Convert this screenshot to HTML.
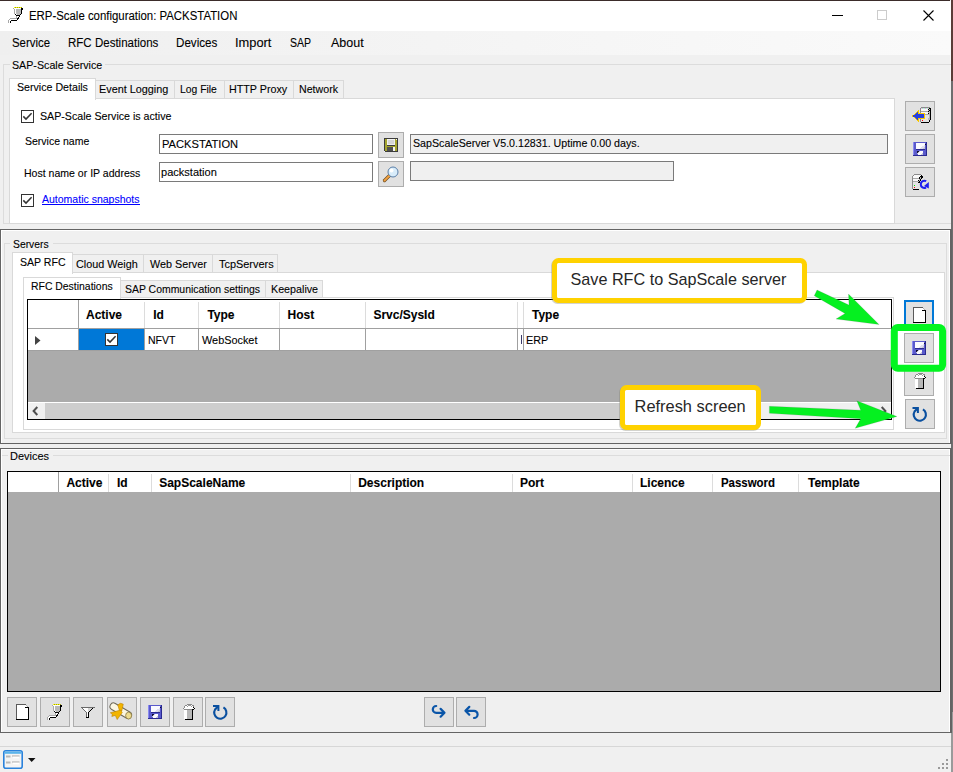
<!DOCTYPE html>
<html><head><meta charset="utf-8"><style>
html,body{margin:0;padding:0;}
body{width:953px;height:772px;position:relative;overflow:hidden;background:#f0f0f0;font-family:"Liberation Sans",sans-serif;color:#000;}
body>div{position:absolute;}
.t{white-space:nowrap;line-height:1;-webkit-text-stroke:0.1px currentColor;}
</style></head><body>
<div style="left:0px;top:0px;width:953px;height:1px;background:#3b2c2a"></div>
<div style="left:951px;top:0px;width:2px;height:81px;background:#5a3d38"></div>
<div style="left:951px;top:81px;width:2px;height:631px;background:#6e6e6e"></div>
<div style="left:951px;top:712px;width:2px;height:60px;background:#9a9a9a"></div>
<div style="left:950px;top:0px;width:1px;height:81px;background:#f7f7f7"></div>
<div style="left:0px;top:1px;width:951px;height:30px;background:#fff"></div>
<div class="t" style="left:28.59px;top:9.52px;font-size:12.5px;transform:scaleX(0.9117);transform-origin:0 0;">ERP-Scale configuration: PACKSTATION</div>
<div style="left:832px;top:15px;width:11px;height:1px;background:#000"></div>
<div style="left:877px;top:10px;width:10px;height:10px;border:1px solid #cccccc;box-sizing:border-box"></div>
<svg style="position:absolute;left:922px;top:9px;" width="13" height="13" viewBox="0 0 13 13"><path d="M1.5 1.5L11.5 11.5M11.5 1.5L1.5 11.5" stroke="#000" stroke-width="1.1" fill="none"/></svg>
<div style="left:0px;top:31px;width:951px;height:24px;background:linear-gradient(to right,#efefef,#fafafa)"></div>
<div class="t" style="left:12.43px;top:36.52px;font-size:12.5px;transform:scaleX(0.9136);transform-origin:0 0;">Service</div>
<div class="t" style="left:68.08px;top:36.52px;font-size:12.5px;transform:scaleX(0.9223);transform-origin:0 0;">RFC Destinations</div>
<div class="t" style="left:176.07px;top:36.52px;font-size:12.5px;transform:scaleX(0.9302);transform-origin:0 0;">Devices</div>
<div class="t" style="left:235.24px;top:36.52px;font-size:12.5px;transform:scaleX(1.0277);transform-origin:0 0;">Import</div>
<div class="t" style="left:290.47px;top:36.52px;font-size:12.5px;transform:scaleX(0.8421);transform-origin:0 0;">SAP</div>
<div class="t" style="left:331.00px;top:36.52px;font-size:12.5px;transform:scaleX(0.9992);transform-origin:0 0;">About</div>
<div style="left:3px;top:64px;width:948px;height:1px;background:#dcdcdc"></div>
<div style="left:3px;top:64px;width:1px;height:160px;background:#dcdcdc"></div>
<div style="left:3px;top:223px;width:948px;height:1px;background:#dcdcdc"></div>
<div style="left:10px;top:58px;width:95px;height:13px;background:#f0f0f0"></div>
<div class="t" style="left:11.51px;top:59.69px;font-size:11px;transform:scaleX(0.9707);transform-origin:0 0;">SAP-Scale Service</div>
<div style="left:9px;top:98px;width:886px;height:126px;background:#fff;border:1px solid #d9d9d9;box-sizing:border-box"></div>
<div style="left:95px;top:80px;width:80px;height:19px;background:#f0f0f0;border:1px solid #d9d9d9;box-sizing:border-box"></div>
<div class="t" style="left:99.44px;top:84.29px;font-size:11px;transform:scaleX(0.9847);transform-origin:0 0;">Event Logging</div>
<div style="left:174px;top:80px;width:51px;height:19px;background:#f0f0f0;border:1px solid #d9d9d9;box-sizing:border-box"></div>
<div class="t" style="left:180.48px;top:84.29px;font-size:11px;transform:scaleX(0.9404);transform-origin:0 0;">Log File</div>
<div style="left:224px;top:80px;width:70px;height:19px;background:#f0f0f0;border:1px solid #d9d9d9;box-sizing:border-box"></div>
<div class="t" style="left:229.25px;top:84.29px;font-size:11px;transform:scaleX(0.9749);transform-origin:0 0;">HTTP Proxy</div>
<div style="left:293px;top:80px;width:51px;height:19px;background:#f0f0f0;border:1px solid #d9d9d9;box-sizing:border-box"></div>
<div class="t" style="left:299.45px;top:84.29px;font-size:11px;transform:scaleX(0.9671);transform-origin:0 0;">Network</div>
<div style="left:9px;top:78px;width:87px;height:22px;background:#fff;border:1px solid #d9d9d9;border-bottom:none;box-sizing:border-box"></div>
<div class="t" style="left:16.82px;top:82.09px;font-size:11px;transform:scaleX(0.9669);transform-origin:0 0;">Service Details</div>
<div style="left:21px;top:110px;width:13px;height:13px;background:#fff;border:1px solid #333;box-sizing:border-box"></div>
<svg style="position:absolute;left:21px;top:110px;" width="13" height="13" viewBox="0 0 13 13"><path d="M2.3 6.4L5 9.1L10.6 3.3" stroke="#333" stroke-width="1.5" fill="none"/></svg>
<div class="t" style="left:39.82px;top:110.99px;font-size:11px;transform:scaleX(0.9685);transform-origin:0 0;">SAP-Scale Service is active</div>
<div class="t" style="left:25.12px;top:135.99px;font-size:11px;transform:scaleX(0.9555);transform-origin:0 0;">Service name</div>
<div class="t" style="left:24.36px;top:168.29px;font-size:11px;transform:scaleX(0.9572);transform-origin:0 0;">Host name or IP address</div>
<div style="left:159px;top:134px;width:214px;height:20px;background:#fff;border:1px solid #7a7a7a;box-sizing:border-box"></div>
<div class="t" style="left:161.61px;top:138.59px;font-size:11px;transform:scaleX(1.0126);transform-origin:0 0;">PACKSTATION</div>
<div style="left:159px;top:162px;width:214px;height:20px;background:#fff;border:1px solid #7a7a7a;box-sizing:border-box"></div>
<div class="t" style="left:161.05px;top:166.69px;font-size:11px;transform:scaleX(1.0032);transform-origin:0 0;">packstation</div>
<div style="left:410px;top:134px;width:478px;height:20px;background:#f0f0f0;border:1px solid #7a7a7a;box-sizing:border-box"></div>
<div class="t" style="left:413.01px;top:138.29px;font-size:11px;transform:scaleX(0.9702);transform-origin:0 0;">SapScaleServer V5.0.12831. Uptime 0.00 days.</div>
<div style="left:410px;top:161px;width:264px;height:20px;background:#f0f0f0;border:1px solid #7a7a7a;box-sizing:border-box"></div>
<div style="left:378px;top:132px;width:26px;height:26px;background:#e1e1e1;border:1px solid #adadad;box-sizing:border-box"></div>
<div style="left:378px;top:161px;width:26px;height:26px;background:#e1e1e1;border:1px solid #adadad;box-sizing:border-box"></div>
<div style="left:21px;top:194px;width:13px;height:13px;background:#fff;border:1px solid #333;box-sizing:border-box"></div>
<svg style="position:absolute;left:21px;top:194px;" width="13" height="13" viewBox="0 0 13 13"><path d="M2.3 6.4L5 9.1L10.6 3.3" stroke="#333" stroke-width="1.5" fill="none"/></svg>
<div class="t" style="left:42.40px;top:193.69px;font-size:11px;transform:scaleX(0.9553);transform-origin:0 0;color:#0000ff">Automatic snapshots</div>
<div style="left:42px;top:204px;width:98px;height:1px;background:#0000ff"></div>
<div style="left:905px;top:101px;width:30px;height:30px;background:#e1e1e1;border:1px solid #adadad;box-sizing:border-box"></div>
<div style="left:905px;top:134px;width:30px;height:30px;background:#e1e1e1;border:1px solid #adadad;box-sizing:border-box"></div>
<div style="left:905px;top:167px;width:30px;height:30px;background:#e1e1e1;border:1px solid #adadad;box-sizing:border-box"></div>
<div style="left:0px;top:229px;width:952px;height:215px;border-top:1px solid #646464;border-left:1px solid #646464;border-bottom:1px solid #646464;border-right:2px solid #646464;box-sizing:border-box"></div>
<div style="left:1px;top:230px;width:949px;height:1px;background:#fff"></div>
<div style="left:1px;top:230px;width:1px;height:213px;background:#fff"></div>
<div style="left:949px;top:230px;width:1px;height:213px;background:#fff"></div>
<div style="left:4px;top:243px;width:943px;height:196px;border:1px solid #dcdcdc;box-sizing:border-box"></div>
<div style="left:10px;top:236px;width:43px;height:15px;background:#f0f0f0"></div>
<div class="t" style="left:12.73px;top:238.69px;font-size:11px;transform:scaleX(0.9405);transform-origin:0 0;">Servers</div>
<div style="left:12px;top:272px;width:933px;height:161px;background:#fff;border:1px solid #d9d9d9;box-sizing:border-box"></div>
<div style="left:72px;top:254px;width:72px;height:19px;background:#f0f0f0;border:1px solid #d9d9d9;box-sizing:border-box"></div>
<div class="t" style="left:75.91px;top:259.09px;font-size:11px;transform:scaleX(0.9821);transform-origin:0 0;">Cloud Weigh</div>
<div style="left:143px;top:254px;width:70px;height:19px;background:#f0f0f0;border:1px solid #d9d9d9;box-sizing:border-box"></div>
<div class="t" style="left:150.10px;top:259.09px;font-size:11px;transform:scaleX(0.9801);transform-origin:0 0;">Web Server</div>
<div style="left:212px;top:254px;width:66px;height:19px;background:#f0f0f0;border:1px solid #d9d9d9;box-sizing:border-box"></div>
<div class="t" style="left:219.05px;top:259.09px;font-size:11px;transform:scaleX(0.9931);transform-origin:0 0;">TcpServers</div>
<div style="left:12px;top:252px;width:61px;height:22px;background:#fff;border:1px solid #d9d9d9;border-bottom:none;box-sizing:border-box"></div>
<div class="t" style="left:19.72px;top:256.69px;font-size:11px;transform:scaleX(0.9591);transform-origin:0 0;">SAP RFC</div>
<div style="left:23px;top:297px;width:871px;height:133px;background:#fff;border:1px solid #d9d9d9;box-sizing:border-box"></div>
<div style="left:120px;top:280px;width:146px;height:18px;background:#f0f0f0;border:1px solid #d9d9d9;box-sizing:border-box"></div>
<div class="t" style="left:124.53px;top:283.89px;font-size:11px;transform:scaleX(0.9492);transform-origin:0 0;">SAP Communication settings</div>
<div style="left:265px;top:280px;width:58px;height:18px;background:#f0f0f0;border:1px solid #d9d9d9;box-sizing:border-box"></div>
<div class="t" style="left:271.35px;top:283.89px;font-size:11px;transform:scaleX(0.9745);transform-origin:0 0;">Keepalive</div>
<div style="left:23px;top:277px;width:98px;height:22px;background:#fff;border:1px solid #d9d9d9;border-bottom:none;box-sizing:border-box"></div>
<div class="t" style="left:30.67px;top:280.99px;font-size:11px;transform:scaleX(0.9471);transform-origin:0 0;">RFC Destinations</div>
<div style="left:27px;top:299px;width:865px;height:121px;background:#ababab;border:1px solid #000;box-sizing:border-box"></div>
<div style="left:28px;top:300px;width:863px;height:29px;background:#fff"></div>
<div style="left:28px;top:328px;width:863px;height:1px;background:#a0a0a0"></div>
<div style="left:28px;top:329px;width:863px;height:22px;background:#fff"></div>
<div style="left:28px;top:350px;width:863px;height:1px;background:#a0a0a0"></div>
<div style="left:78px;top:300px;width:1px;height:28px;background:#a0a0a0"></div>
<div style="left:78px;top:329px;width:1px;height:22px;background:#a0a0a0"></div>
<div style="left:144px;top:302px;width:1px;height:26px;background:#dcdcdc"></div>
<div style="left:144px;top:329px;width:1px;height:22px;background:#a0a0a0"></div>
<div style="left:198px;top:302px;width:1px;height:26px;background:#dcdcdc"></div>
<div style="left:198px;top:329px;width:1px;height:22px;background:#a0a0a0"></div>
<div style="left:279px;top:302px;width:1px;height:26px;background:#dcdcdc"></div>
<div style="left:279px;top:329px;width:1px;height:22px;background:#a0a0a0"></div>
<div style="left:365px;top:302px;width:1px;height:26px;background:#dcdcdc"></div>
<div style="left:365px;top:329px;width:1px;height:22px;background:#a0a0a0"></div>
<div style="left:517px;top:302px;width:1px;height:26px;background:#dcdcdc"></div>
<div style="left:517px;top:329px;width:1px;height:22px;background:#a0a0a0"></div>
<div style="left:523px;top:302px;width:1px;height:26px;background:#dcdcdc"></div>
<div style="left:523px;top:329px;width:1px;height:22px;background:#a0a0a0"></div>
<div style="left:79px;top:329px;width:65px;height:21px;background:#0078d7"></div>
<div style="left:105px;top:333px;width:13px;height:13px;background:#fff;border:1px solid #333;box-sizing:border-box"></div>
<svg style="position:absolute;left:105px;top:333px;" width="13" height="13" viewBox="0 0 13 13"><path d="M2.3 6.4L5 9.1L10.6 3.3" stroke="#333" stroke-width="1.5" fill="none"/></svg>
<svg style="position:absolute;left:35px;top:336px;" width="6" height="10" viewBox="0 0 6 10"><path d="M0 0L5.5 4.5L0 9Z" fill="#444"/></svg>
<div class="t" style="left:86.00px;top:309.04px;font-size:12px;font-weight:bold;">Active</div>
<div class="t" style="left:153.20px;top:309.04px;font-size:12px;font-weight:bold;">Id</div>
<div class="t" style="left:207.40px;top:309.04px;font-size:12px;font-weight:bold;">Type</div>
<div class="t" style="left:287.50px;top:309.04px;font-size:12px;font-weight:bold;">Host</div>
<div class="t" style="left:373.40px;top:309.04px;font-size:12px;font-weight:bold;">Srvc/SysId</div>
<div class="t" style="left:532.00px;top:309.04px;font-size:12px;font-weight:bold;">Type</div>
<div class="t" style="left:147.86px;top:334.89px;font-size:11px;transform:scaleX(0.9557);transform-origin:0 0;">NFVT</div>
<div class="t" style="left:202.30px;top:334.89px;font-size:11px;transform:scaleX(0.9893);transform-origin:0 0;">WebSocket</div>
<div class="t" style="left:526.44px;top:334.89px;font-size:11px;transform:scaleX(0.9846);transform-origin:0 0;">ERP</div>
<div style="left:521px;top:335px;width:1px;height:9px;background:#3a3a6a"></div>
<div style="left:28px;top:402px;width:863px;height:1px;background:#fff"></div>
<div style="left:28px;top:403px;width:863px;height:16px;background:#f0f0f0"></div>
<div style="left:45px;top:403px;width:656px;height:16px;background:#cdcdcd"></div>
<svg style="position:absolute;left:31px;top:405px;" width="10" height="12" viewBox="0 0 10 12"><path d="M6.3 2L2.6 6L6.3 10" stroke="#505050" stroke-width="2" fill="none"/></svg>
<svg style="position:absolute;left:879px;top:405px;" width="10" height="12" viewBox="0 0 10 12"><path d="M2.7 2L6.4 6L2.7 10" stroke="#505050" stroke-width="2" fill="none"/></svg>
<div style="left:904px;top:300px;width:30px;height:30px;background:#e1e1e1;border:2px solid #0078d7;box-sizing:border-box"></div>
<div style="left:904px;top:333px;width:30px;height:30px;background:#e1e1e1;border:1px solid #adadad;box-sizing:border-box"></div>
<div style="left:904px;top:366px;width:30px;height:30px;background:#e1e1e1;border:1px solid #adadad;box-sizing:border-box"></div>
<div style="left:905px;top:399px;width:30px;height:30px;background:#e1e1e1;border:1px solid #adadad;box-sizing:border-box"></div>
<div style="left:0px;top:448px;width:952px;height:285px;border-top:1px solid #646464;border-left:1px solid #646464;border-bottom:1px solid #646464;border-right:2px solid #646464;box-sizing:border-box"></div>
<div style="left:1px;top:449px;width:949px;height:1px;background:#fff"></div>
<div style="left:1px;top:449px;width:1px;height:283px;background:#fff"></div>
<div style="left:949px;top:449px;width:1px;height:283px;background:#fff"></div>
<div style="left:2px;top:455px;width:948px;height:1px;background:#dcdcdc"></div>
<div style="left:8px;top:450px;width:45px;height:13px;background:#f0f0f0"></div>
<div class="t" style="left:9.63px;top:450.69px;font-size:11px;transform:scaleX(0.9954);transform-origin:0 0;">Devices</div>
<div style="left:7px;top:471px;width:934px;height:221px;background:#ababab;border:1px solid #000;box-sizing:border-box"></div>
<div style="left:8px;top:472px;width:932px;height:20px;background:#fff"></div>
<div style="left:58px;top:472px;width:1px;height:20px;background:#a0a0a0"></div>
<div style="left:108px;top:474px;width:1px;height:18px;background:#dcdcdc"></div>
<div style="left:151px;top:474px;width:1px;height:18px;background:#dcdcdc"></div>
<div style="left:350px;top:474px;width:1px;height:18px;background:#dcdcdc"></div>
<div style="left:512px;top:474px;width:1px;height:18px;background:#dcdcdc"></div>
<div style="left:632px;top:474px;width:1px;height:18px;background:#dcdcdc"></div>
<div style="left:712px;top:474px;width:1px;height:18px;background:#dcdcdc"></div>
<div style="left:798px;top:474px;width:1px;height:18px;background:#dcdcdc"></div>
<div class="t" style="left:66.40px;top:477.14px;font-size:12px;font-weight:bold;">Active</div>
<div class="t" style="left:117.00px;top:477.14px;font-size:12px;font-weight:bold;">Id</div>
<div class="t" style="left:159.20px;top:477.14px;font-size:12px;font-weight:bold;">SapScaleName</div>
<div class="t" style="left:358.20px;top:477.14px;font-size:12px;font-weight:bold;">Description</div>
<div class="t" style="left:520.00px;top:477.14px;font-size:12px;font-weight:bold;">Port</div>
<div class="t" style="left:640.00px;top:477.14px;font-size:12px;font-weight:bold;">Licence</div>
<div class="t" style="left:808.00px;top:477.14px;font-size:12px;font-weight:bold;">Template</div>
<div class="t" style="left:720.79px;top:477.14px;font-size:12px;font-weight:bold;transform:scaleX(0.9524);transform-origin:0 0;">Password</div>
<div style="left:7px;top:697px;width:30px;height:30px;background:#e1e1e1;border:1px solid #adadad;box-sizing:border-box"></div>
<div style="left:40px;top:697px;width:30px;height:30px;background:#e1e1e1;border:1px solid #adadad;box-sizing:border-box"></div>
<div style="left:73px;top:697px;width:30px;height:30px;background:#e1e1e1;border:1px solid #adadad;box-sizing:border-box"></div>
<div style="left:107px;top:697px;width:30px;height:30px;background:#e1e1e1;border:1px solid #adadad;box-sizing:border-box"></div>
<div style="left:140px;top:697px;width:30px;height:30px;background:#e1e1e1;border:1px solid #adadad;box-sizing:border-box"></div>
<div style="left:173px;top:697px;width:30px;height:30px;background:#e1e1e1;border:1px solid #adadad;box-sizing:border-box"></div>
<div style="left:205px;top:697px;width:30px;height:30px;background:#e1e1e1;border:1px solid #adadad;box-sizing:border-box"></div>
<div style="left:424px;top:697px;width:30px;height:30px;background:#e1e1e1;border:1px solid #adadad;box-sizing:border-box"></div>
<div style="left:456px;top:697px;width:30px;height:30px;background:#e1e1e1;border:1px solid #adadad;box-sizing:border-box"></div>
<div style="left:0px;top:746px;width:951px;height:1px;background:#d7d7d7"></div>
<svg style="position:absolute;left:0;top:0" width="953" height="772" viewBox="0 0 953 772"><rect x="14" y="7" width="1" height="1" fill="#ffff00"/><rect x="15" y="7" width="1" height="1" fill="#9a9a10"/><rect x="16" y="7" width="1" height="1" fill="#ffff00"/><rect x="17" y="7" width="1" height="1" fill="#9a9a10"/><rect x="18" y="7" width="1" height="1" fill="#ffff00"/><rect x="19" y="7" width="1" height="1" fill="#9a9a10"/><rect x="20" y="7" width="1" height="1" fill="#ffff00"/><rect x="21" y="7" width="1" height="1" fill="#9a9a10"/><rect x="13" y="8" width="1" height="1" fill="#a8a8a8"/><rect x="14" y="8" width="7" height="1" fill="#ffffff"/><rect x="21" y="8" width="2" height="1" fill="#000000"/><rect x="14" y="9" width="1" height="1" fill="#a8a8a8"/><rect x="15" y="9" width="1" height="1" fill="#ffffff"/><rect x="16" y="9" width="5" height="1" fill="#b8b8b8"/><rect x="21" y="9" width="2" height="1" fill="#000000"/><rect x="14" y="10" width="1" height="1" fill="#a8a8a8"/><rect x="15" y="10" width="1" height="1" fill="#ffffff"/><rect x="16" y="10" width="5" height="1" fill="#b8b8b8"/><rect x="21" y="10" width="1" height="1" fill="#000000"/><rect x="14" y="11" width="1" height="1" fill="#a8a8a8"/><rect x="15" y="11" width="1" height="1" fill="#ffffff"/><rect x="16" y="11" width="5" height="1" fill="#b8b8b8"/><rect x="21" y="11" width="1" height="1" fill="#000000"/><rect x="14" y="12" width="1" height="1" fill="#a8a8a8"/><rect x="15" y="12" width="1" height="1" fill="#ffffff"/><rect x="16" y="12" width="5" height="1" fill="#b8b8b8"/><rect x="21" y="12" width="1" height="1" fill="#000000"/><rect x="14" y="13" width="1" height="1" fill="#a8a8a8"/><rect x="15" y="13" width="1" height="1" fill="#ffffff"/><rect x="16" y="13" width="5" height="1" fill="#b8b8b8"/><rect x="21" y="13" width="1" height="1" fill="#000000"/><rect x="15" y="14" width="1" height="1" fill="#000000"/><rect x="16" y="14" width="1" height="1" fill="#ffffff"/><rect x="17" y="14" width="3" height="1" fill="#b8b8b8"/><rect x="20" y="14" width="1" height="1" fill="#000000"/><rect x="16" y="15" width="4" height="1" fill="#000000"/><rect x="16" y="16" width="1" height="1" fill="#a8a8a8"/><rect x="17" y="16" width="2" height="1" fill="#ffffff"/><rect x="19" y="16" width="1" height="1" fill="#000000"/><rect x="16" y="17" width="1" height="1" fill="#a8a8a8"/><rect x="17" y="17" width="1" height="1" fill="#ffffff"/><rect x="18" y="17" width="1" height="1" fill="#000000"/><rect x="10" y="18" width="7" height="1" fill="#a8a8a8"/><rect x="17" y="18" width="2" height="1" fill="#000000"/><rect x="9" y="19" width="1" height="1" fill="#a8a8a8"/><rect x="10" y="19" width="7" height="1" fill="#ffffff"/><rect x="17" y="19" width="1" height="1" fill="#000000"/><rect x="8" y="20" width="1" height="1" fill="#a8a8a8"/><rect x="9" y="20" width="2" height="1" fill="#ffffff"/><rect x="11" y="20" width="6" height="1" fill="#000000"/><rect x="8" y="21" width="1" height="1" fill="#a8a8a8"/><rect x="9" y="21" width="1" height="1" fill="#ffffff"/><rect x="10" y="21" width="1" height="1" fill="#000000"/><rect x="8" y="22" width="1" height="1" fill="#a8a8a8"/><rect x="9" y="22" width="1" height="1" fill="#ffffff"/><rect x="10" y="22" width="1" height="1" fill="#000000"/><rect x="384" y="138" width="14" height="1" fill="#3c3c3c"/><rect x="384" y="139" width="1" height="1" fill="#3c3c3c"/><rect x="385" y="139" width="2" height="1" fill="#a3a32e"/><rect x="387" y="139" width="8" height="1" fill="#f4f4f4"/><rect x="395" y="139" width="1" height="1" fill="#a3a32e"/><rect x="396" y="139" width="1" height="1" fill="#f4f4f4"/><rect x="397" y="139" width="1" height="1" fill="#3c3c3c"/><rect x="384" y="140" width="1" height="1" fill="#3c3c3c"/><rect x="385" y="140" width="2" height="1" fill="#a3a32e"/><rect x="387" y="140" width="1" height="1" fill="#eeeeee"/><rect x="388" y="140" width="6" height="1" fill="#d6d6d6"/><rect x="394" y="140" width="1" height="1" fill="#eeeeee"/><rect x="395" y="140" width="2" height="1" fill="#a3a32e"/><rect x="397" y="140" width="1" height="1" fill="#3c3c3c"/><rect x="384" y="141" width="1" height="1" fill="#3c3c3c"/><rect x="385" y="141" width="2" height="1" fill="#a3a32e"/><rect x="387" y="141" width="1" height="1" fill="#eeeeee"/><rect x="388" y="141" width="6" height="1" fill="#d6d6d6"/><rect x="394" y="141" width="1" height="1" fill="#eeeeee"/><rect x="395" y="141" width="2" height="1" fill="#a3a32e"/><rect x="397" y="141" width="1" height="1" fill="#3c3c3c"/><rect x="384" y="142" width="1" height="1" fill="#3c3c3c"/><rect x="385" y="142" width="2" height="1" fill="#a3a32e"/><rect x="387" y="142" width="1" height="1" fill="#eeeeee"/><rect x="388" y="142" width="6" height="1" fill="#d6d6d6"/><rect x="394" y="142" width="1" height="1" fill="#eeeeee"/><rect x="395" y="142" width="2" height="1" fill="#a3a32e"/><rect x="397" y="142" width="1" height="1" fill="#3c3c3c"/><rect x="384" y="143" width="1" height="1" fill="#3c3c3c"/><rect x="385" y="143" width="2" height="1" fill="#a3a32e"/><rect x="387" y="143" width="1" height="1" fill="#eeeeee"/><rect x="388" y="143" width="6" height="1" fill="#d6d6d6"/><rect x="394" y="143" width="1" height="1" fill="#eeeeee"/><rect x="395" y="143" width="2" height="1" fill="#a3a32e"/><rect x="397" y="143" width="1" height="1" fill="#3c3c3c"/><rect x="384" y="144" width="1" height="1" fill="#3c3c3c"/><rect x="385" y="144" width="2" height="1" fill="#a3a32e"/><rect x="387" y="144" width="8" height="1" fill="#eeeeee"/><rect x="395" y="144" width="2" height="1" fill="#a3a32e"/><rect x="397" y="144" width="1" height="1" fill="#3c3c3c"/><rect x="384" y="145" width="1" height="1" fill="#3c3c3c"/><rect x="385" y="145" width="2" height="1" fill="#a3a32e"/><rect x="387" y="145" width="8" height="1" fill="#3c3c3c"/><rect x="395" y="145" width="2" height="1" fill="#a3a32e"/><rect x="397" y="145" width="1" height="1" fill="#3c3c3c"/><rect x="384" y="146" width="1" height="1" fill="#3c3c3c"/><rect x="385" y="146" width="12" height="1" fill="#a3a32e"/><rect x="397" y="146" width="1" height="1" fill="#3c3c3c"/><rect x="384" y="147" width="1" height="1" fill="#3c3c3c"/><rect x="385" y="147" width="2" height="1" fill="#a3a32e"/><rect x="387" y="147" width="6" height="1" fill="#505050"/><rect x="393" y="147" width="2" height="1" fill="#f4f4f4"/><rect x="395" y="147" width="2" height="1" fill="#a3a32e"/><rect x="397" y="147" width="1" height="1" fill="#3c3c3c"/><rect x="384" y="148" width="1" height="1" fill="#3c3c3c"/><rect x="385" y="148" width="2" height="1" fill="#a3a32e"/><rect x="387" y="148" width="6" height="1" fill="#505050"/><rect x="393" y="148" width="2" height="1" fill="#f4f4f4"/><rect x="395" y="148" width="2" height="1" fill="#a3a32e"/><rect x="397" y="148" width="1" height="1" fill="#3c3c3c"/><rect x="384" y="149" width="1" height="1" fill="#3c3c3c"/><rect x="385" y="149" width="2" height="1" fill="#a3a32e"/><rect x="387" y="149" width="6" height="1" fill="#505050"/><rect x="393" y="149" width="2" height="1" fill="#f4f4f4"/><rect x="395" y="149" width="2" height="1" fill="#a3a32e"/><rect x="397" y="149" width="1" height="1" fill="#3c3c3c"/><rect x="384" y="150" width="1" height="1" fill="#3c3c3c"/><rect x="385" y="150" width="2" height="1" fill="#a3a32e"/><rect x="387" y="150" width="6" height="1" fill="#505050"/><rect x="393" y="150" width="2" height="1" fill="#f4f4f4"/><rect x="395" y="150" width="2" height="1" fill="#a3a32e"/><rect x="397" y="150" width="1" height="1" fill="#3c3c3c"/><rect x="384" y="151" width="1" height="1" fill="#f4f4f4"/><rect x="385" y="151" width="13" height="1" fill="#3c3c3c"/><g transform="translate(383,166)"><path d="M6.5 9.5L1.5 14.5" stroke="#6a4a20" stroke-width="3.2" stroke-linecap="round"/><path d="M6.5 9.5L1.5 14.5" stroke="#f0a040" stroke-width="2" stroke-linecap="round"/><circle cx="10" cy="6" r="5" fill="#d8ecfa" stroke="#5a7fa8" stroke-width="1"/><circle cx="8.5" cy="4.5" r="2" fill="#fff"/></g><rect x="921" y="107" width="9" height="1" fill="#8a8a8a"/><rect x="920" y="108" width="1" height="1" fill="#8a8a8a"/><rect x="921" y="108" width="1" height="1" fill="#f0b0f0"/><rect x="922" y="108" width="1" height="1" fill="#b0f0b0"/><rect x="923" y="108" width="1" height="1" fill="#b0f0f0"/><rect x="924" y="108" width="1" height="1" fill="#f0b0f0"/><rect x="925" y="108" width="1" height="1" fill="#b0f0b0"/><rect x="926" y="108" width="1" height="1" fill="#b0f0f0"/><rect x="927" y="108" width="1" height="1" fill="#f0b0f0"/><rect x="928" y="108" width="1" height="1" fill="#b0f0b0"/><rect x="929" y="108" width="2" height="1" fill="#000000"/><rect x="920" y="109" width="1" height="1" fill="#8a8a8a"/><rect x="921" y="109" width="7" height="1" fill="#f8f8f8"/><rect x="928" y="109" width="1" height="1" fill="#000000"/><rect x="929" y="109" width="1" height="1" fill="#b8b8b8"/><rect x="930" y="109" width="1" height="1" fill="#000000"/><rect x="920" y="110" width="1" height="1" fill="#8a8a8a"/><rect x="921" y="110" width="7" height="1" fill="#f8f8f8"/><rect x="928" y="110" width="1" height="1" fill="#b8b8b8"/><rect x="929" y="110" width="2" height="1" fill="#000000"/><rect x="920" y="111" width="1" height="1" fill="#8a8a8a"/><rect x="921" y="111" width="7" height="1" fill="#a8a8a8"/><rect x="928" y="111" width="1" height="1" fill="#000000"/><rect x="929" y="111" width="1" height="1" fill="#b8b8b8"/><rect x="930" y="111" width="1" height="1" fill="#000000"/><rect x="920" y="112" width="1" height="1" fill="#8a8a8a"/><rect x="921" y="112" width="7" height="1" fill="#f8f8f8"/><rect x="928" y="112" width="2" height="1" fill="#b8b8b8"/><rect x="930" y="112" width="1" height="1" fill="#000000"/><rect x="920" y="113" width="1" height="1" fill="#8a8a8a"/><rect x="921" y="113" width="7" height="1" fill="#f8f8f8"/><rect x="928" y="113" width="1" height="1" fill="#000000"/><rect x="929" y="113" width="1" height="1" fill="#b8b8b8"/><rect x="930" y="113" width="1" height="1" fill="#000000"/><rect x="920" y="114" width="1" height="1" fill="#8a8a8a"/><rect x="921" y="114" width="7" height="1" fill="#a8a8a8"/><rect x="928" y="114" width="2" height="1" fill="#b8b8b8"/><rect x="930" y="114" width="1" height="1" fill="#000000"/><rect x="920" y="115" width="1" height="1" fill="#8a8a8a"/><rect x="921" y="115" width="8" height="1" fill="#e4e4e4"/><rect x="929" y="115" width="1" height="1" fill="#b8b8b8"/><rect x="930" y="115" width="1" height="1" fill="#000000"/><rect x="920" y="116" width="1" height="1" fill="#8a8a8a"/><rect x="921" y="116" width="8" height="1" fill="#e4e4e4"/><rect x="929" y="116" width="1" height="1" fill="#b8b8b8"/><rect x="930" y="116" width="1" height="1" fill="#000000"/><rect x="920" y="117" width="1" height="1" fill="#8a8a8a"/><rect x="921" y="117" width="8" height="1" fill="#e4e4e4"/><rect x="929" y="117" width="1" height="1" fill="#b8b8b8"/><rect x="930" y="117" width="1" height="1" fill="#000000"/><rect x="920" y="118" width="1" height="1" fill="#8a8a8a"/><rect x="921" y="118" width="1" height="1" fill="#e4e4e4"/><rect x="922" y="118" width="1" height="1" fill="#00e000"/><rect x="923" y="118" width="5" height="1" fill="#e4e4e4"/><rect x="928" y="118" width="2" height="1" fill="#b8b8b8"/><rect x="930" y="118" width="1" height="1" fill="#000000"/><rect x="920" y="119" width="1" height="1" fill="#8a8a8a"/><rect x="921" y="119" width="5" height="1" fill="#e4e4e4"/><rect x="926" y="119" width="1" height="1" fill="#f8f0a0"/><rect x="927" y="119" width="1" height="1" fill="#e4e4e4"/><rect x="928" y="119" width="2" height="1" fill="#b8b8b8"/><rect x="930" y="119" width="1" height="1" fill="#000000"/><rect x="920" y="120" width="1" height="1" fill="#8a8a8a"/><rect x="921" y="120" width="1" height="1" fill="#e4e4e4"/><rect x="922" y="120" width="1" height="1" fill="#ff0000"/><rect x="923" y="120" width="6" height="1" fill="#e4e4e4"/><rect x="929" y="120" width="1" height="1" fill="#000000"/><rect x="920" y="121" width="1" height="1" fill="#8a8a8a"/><rect x="921" y="121" width="8" height="1" fill="#e4e4e4"/><rect x="929" y="121" width="1" height="1" fill="#000000"/><rect x="921" y="122" width="8" height="1" fill="#000000"/><rect x="918" y="110" width="1" height="1" fill="#f8c800"/><rect x="917" y="111" width="2" height="1" fill="#f8c800"/><rect x="916" y="112" width="1" height="1" fill="#f8c800"/><rect x="917" y="112" width="1" height="1" fill="#2840e0"/><rect x="918" y="112" width="1" height="1" fill="#f8c800"/><rect x="915" y="113" width="1" height="1" fill="#f8c800"/><rect x="916" y="113" width="2" height="1" fill="#2840e0"/><rect x="918" y="113" width="7" height="1" fill="#f8c800"/><rect x="914" y="114" width="1" height="1" fill="#f8c800"/><rect x="915" y="114" width="9" height="1" fill="#2840e0"/><rect x="924" y="114" width="1" height="1" fill="#f8c800"/><rect x="912" y="115" width="1" height="1" fill="#f8c800"/><rect x="913" y="115" width="11" height="1" fill="#2840e0"/><rect x="924" y="115" width="1" height="1" fill="#f8c800"/><rect x="912" y="116" width="1" height="1" fill="#f8c800"/><rect x="913" y="116" width="11" height="1" fill="#2840e0"/><rect x="924" y="116" width="1" height="1" fill="#f8c800"/><rect x="914" y="117" width="1" height="1" fill="#f8c800"/><rect x="915" y="117" width="9" height="1" fill="#2840e0"/><rect x="924" y="117" width="1" height="1" fill="#f8c800"/><rect x="915" y="118" width="1" height="1" fill="#f8c800"/><rect x="916" y="118" width="2" height="1" fill="#2840e0"/><rect x="918" y="118" width="7" height="1" fill="#f8c800"/><rect x="916" y="119" width="1" height="1" fill="#f8c800"/><rect x="917" y="119" width="1" height="1" fill="#2840e0"/><rect x="918" y="119" width="1" height="1" fill="#f8c800"/><rect x="917" y="120" width="2" height="1" fill="#f8c800"/><rect x="918" y="121" width="1" height="1" fill="#f8c800"/><rect x="913" y="142" width="1" height="1" fill="#8a8af0"/><rect x="914" y="142" width="12" height="1" fill="#5a5acc"/><rect x="926" y="142" width="1" height="1" fill="#2a2a90"/><rect x="913" y="143" width="1" height="1" fill="#8a8af0"/><rect x="914" y="143" width="2" height="1" fill="#5a5acc"/><rect x="916" y="143" width="9" height="1" fill="#fafaff"/><rect x="925" y="143" width="1" height="1" fill="#5a5acc"/><rect x="926" y="143" width="1" height="1" fill="#2a2a90"/><rect x="913" y="144" width="1" height="1" fill="#8a8af0"/><rect x="914" y="144" width="2" height="1" fill="#5a5acc"/><rect x="916" y="144" width="9" height="1" fill="#fafaff"/><rect x="925" y="144" width="1" height="1" fill="#101030"/><rect x="926" y="144" width="1" height="1" fill="#2a2a90"/><rect x="913" y="145" width="1" height="1" fill="#8a8af0"/><rect x="914" y="145" width="2" height="1" fill="#5a5acc"/><rect x="916" y="145" width="8" height="1" fill="#fafaff"/><rect x="924" y="145" width="1" height="1" fill="#dedef0"/><rect x="925" y="145" width="1" height="1" fill="#5a5acc"/><rect x="926" y="145" width="1" height="1" fill="#2a2a90"/><rect x="913" y="146" width="1" height="1" fill="#8a8af0"/><rect x="914" y="146" width="2" height="1" fill="#5a5acc"/><rect x="916" y="146" width="6" height="1" fill="#fafaff"/><rect x="922" y="146" width="3" height="1" fill="#dedef0"/><rect x="925" y="146" width="1" height="1" fill="#5a5acc"/><rect x="926" y="146" width="1" height="1" fill="#2a2a90"/><rect x="913" y="147" width="1" height="1" fill="#8a8af0"/><rect x="914" y="147" width="2" height="1" fill="#5a5acc"/><rect x="916" y="147" width="5" height="1" fill="#fafaff"/><rect x="921" y="147" width="3" height="1" fill="#dedef0"/><rect x="924" y="147" width="1" height="1" fill="#c4c4d8"/><rect x="925" y="147" width="1" height="1" fill="#5a5acc"/><rect x="926" y="147" width="1" height="1" fill="#2a2a90"/><rect x="913" y="148" width="1" height="1" fill="#8a8af0"/><rect x="914" y="148" width="2" height="1" fill="#5a5acc"/><rect x="916" y="148" width="4" height="1" fill="#fafaff"/><rect x="920" y="148" width="3" height="1" fill="#dedef0"/><rect x="923" y="148" width="2" height="1" fill="#c4c4d8"/><rect x="925" y="148" width="1" height="1" fill="#5a5acc"/><rect x="926" y="148" width="1" height="1" fill="#2a2a90"/><rect x="913" y="149" width="1" height="1" fill="#8a8af0"/><rect x="914" y="149" width="2" height="1" fill="#5a5acc"/><rect x="916" y="149" width="9" height="1" fill="#2a2a90"/><rect x="925" y="149" width="1" height="1" fill="#5a5acc"/><rect x="926" y="149" width="1" height="1" fill="#2a2a90"/><rect x="913" y="150" width="1" height="1" fill="#8a8af0"/><rect x="914" y="150" width="12" height="1" fill="#5a5acc"/><rect x="926" y="150" width="1" height="1" fill="#2a2a90"/><rect x="913" y="151" width="1" height="1" fill="#8a8af0"/><rect x="914" y="151" width="3" height="1" fill="#5a5acc"/><rect x="917" y="151" width="2" height="1" fill="#101030"/><rect x="919" y="151" width="1" height="1" fill="#c4c4d8"/><rect x="920" y="151" width="3" height="1" fill="#fafaff"/><rect x="923" y="151" width="3" height="1" fill="#5a5acc"/><rect x="926" y="151" width="1" height="1" fill="#2a2a90"/><rect x="913" y="152" width="1" height="1" fill="#8a8af0"/><rect x="914" y="152" width="3" height="1" fill="#5a5acc"/><rect x="917" y="152" width="1" height="1" fill="#101030"/><rect x="918" y="152" width="1" height="1" fill="#c4c4d8"/><rect x="919" y="152" width="4" height="1" fill="#fafaff"/><rect x="923" y="152" width="3" height="1" fill="#5a5acc"/><rect x="926" y="152" width="1" height="1" fill="#2a2a90"/><rect x="913" y="153" width="1" height="1" fill="#8a8af0"/><rect x="914" y="153" width="3" height="1" fill="#5a5acc"/><rect x="917" y="153" width="1" height="1" fill="#c4c4d8"/><rect x="918" y="153" width="4" height="1" fill="#fafaff"/><rect x="922" y="153" width="1" height="1" fill="#c4c4d8"/><rect x="923" y="153" width="3" height="1" fill="#5a5acc"/><rect x="926" y="153" width="1" height="1" fill="#2a2a90"/><rect x="913" y="154" width="1" height="1" fill="#8a8af0"/><rect x="914" y="154" width="4" height="1" fill="#5a5acc"/><rect x="918" y="154" width="3" height="1" fill="#fafaff"/><rect x="921" y="154" width="2" height="1" fill="#c4c4d8"/><rect x="923" y="154" width="3" height="1" fill="#5a5acc"/><rect x="926" y="154" width="1" height="1" fill="#2a2a90"/><rect x="913" y="155" width="14" height="1" fill="#2a2a90"/><rect x="914" y="174" width="7" height="1" fill="#8a8a8a"/><rect x="913" y="175" width="1" height="1" fill="#8a8a8a"/><rect x="914" y="175" width="7" height="1" fill="#f8f8f8"/><rect x="921" y="175" width="1" height="1" fill="#000000"/><rect x="912" y="176" width="1" height="1" fill="#8a8a8a"/><rect x="913" y="176" width="7" height="1" fill="#f8f8f8"/><rect x="920" y="176" width="3" height="1" fill="#000000"/><rect x="912" y="177" width="1" height="1" fill="#8a8a8a"/><rect x="913" y="177" width="6" height="1" fill="#f8f8f8"/><rect x="919" y="177" width="1" height="1" fill="#000000"/><rect x="920" y="177" width="1" height="1" fill="#b8b8b8"/><rect x="921" y="177" width="2" height="1" fill="#000000"/><rect x="912" y="178" width="1" height="1" fill="#8a8a8a"/><rect x="913" y="178" width="6" height="1" fill="#a8a8a8"/><rect x="919" y="178" width="1" height="1" fill="#000000"/><rect x="920" y="178" width="1" height="1" fill="#b8b8b8"/><rect x="921" y="178" width="1" height="1" fill="#000000"/><rect x="912" y="179" width="1" height="1" fill="#8a8a8a"/><rect x="913" y="179" width="6" height="1" fill="#f8f8f8"/><rect x="919" y="179" width="1" height="1" fill="#b8b8b8"/><rect x="920" y="179" width="1" height="1" fill="#000000"/><rect x="912" y="180" width="1" height="1" fill="#8a8a8a"/><rect x="913" y="180" width="5" height="1" fill="#f8f8f8"/><rect x="918" y="180" width="1" height="1" fill="#000000"/><rect x="919" y="180" width="1" height="1" fill="#b8b8b8"/><rect x="920" y="180" width="1" height="1" fill="#000000"/><rect x="912" y="181" width="1" height="1" fill="#8a8a8a"/><rect x="913" y="181" width="5" height="1" fill="#a8a8a8"/><rect x="918" y="181" width="1" height="1" fill="#b8b8b8"/><rect x="919" y="181" width="1" height="1" fill="#000000"/><rect x="912" y="182" width="1" height="1" fill="#8a8a8a"/><rect x="913" y="182" width="5" height="1" fill="#e4e4e4"/><rect x="918" y="182" width="2" height="1" fill="#000000"/><rect x="912" y="183" width="1" height="1" fill="#8a8a8a"/><rect x="913" y="183" width="6" height="1" fill="#e4e4e4"/><rect x="912" y="184" width="1" height="1" fill="#8a8a8a"/><rect x="913" y="184" width="6" height="1" fill="#e4e4e4"/><rect x="912" y="185" width="1" height="1" fill="#8a8a8a"/><rect x="913" y="185" width="1" height="1" fill="#e4e4e4"/><rect x="914" y="185" width="1" height="1" fill="#00e000"/><rect x="915" y="185" width="4" height="1" fill="#e4e4e4"/><rect x="912" y="186" width="1" height="1" fill="#8a8a8a"/><rect x="913" y="186" width="6" height="1" fill="#e4e4e4"/><rect x="912" y="187" width="1" height="1" fill="#8a8a8a"/><rect x="913" y="187" width="1" height="1" fill="#e4e4e4"/><rect x="914" y="187" width="1" height="1" fill="#ff0000"/><rect x="915" y="187" width="4" height="1" fill="#e4e4e4"/><rect x="912" y="188" width="1" height="1" fill="#8a8a8a"/><rect x="913" y="188" width="6" height="1" fill="#e4e4e4"/><rect x="913" y="189" width="6" height="1" fill="#000000"/><path d="M926.2 181.2A3.6 3.6 0 1 0 926 187.5" fill="none" stroke="#2020f0" stroke-width="2"/><path d="M924 186L928.8 182V188.5Z" fill="#2020f0"/><rect x="913" y="307" width="10" height="1" fill="#5a5a5a"/><rect x="913" y="308" width="1" height="1" fill="#5a5a5a"/><rect x="914" y="308" width="9" height="1" fill="#ffffff"/><rect x="923" y="308" width="1" height="1" fill="#b0b0b0"/><rect x="913" y="309" width="1" height="1" fill="#5a5a5a"/><rect x="914" y="309" width="10" height="1" fill="#ffffff"/><rect x="924" y="309" width="1" height="1" fill="#b0b0b0"/><rect x="913" y="310" width="1" height="1" fill="#5a5a5a"/><rect x="914" y="310" width="8" height="1" fill="#ffffff"/><rect x="922" y="310" width="4" height="1" fill="#000000"/><rect x="913" y="311" width="1" height="1" fill="#5a5a5a"/><rect x="914" y="311" width="11" height="1" fill="#ffffff"/><rect x="925" y="311" width="1" height="1" fill="#000000"/><rect x="913" y="312" width="1" height="1" fill="#5a5a5a"/><rect x="914" y="312" width="11" height="1" fill="#ffffff"/><rect x="925" y="312" width="1" height="1" fill="#000000"/><rect x="913" y="313" width="1" height="1" fill="#5a5a5a"/><rect x="914" y="313" width="11" height="1" fill="#ffffff"/><rect x="925" y="313" width="1" height="1" fill="#000000"/><rect x="913" y="314" width="1" height="1" fill="#5a5a5a"/><rect x="914" y="314" width="11" height="1" fill="#ffffff"/><rect x="925" y="314" width="1" height="1" fill="#000000"/><rect x="913" y="315" width="1" height="1" fill="#5a5a5a"/><rect x="914" y="315" width="11" height="1" fill="#ffffff"/><rect x="925" y="315" width="1" height="1" fill="#000000"/><rect x="913" y="316" width="1" height="1" fill="#5a5a5a"/><rect x="914" y="316" width="11" height="1" fill="#ffffff"/><rect x="925" y="316" width="1" height="1" fill="#000000"/><rect x="913" y="317" width="1" height="1" fill="#5a5a5a"/><rect x="914" y="317" width="11" height="1" fill="#ffffff"/><rect x="925" y="317" width="1" height="1" fill="#000000"/><rect x="913" y="318" width="1" height="1" fill="#5a5a5a"/><rect x="914" y="318" width="11" height="1" fill="#ffffff"/><rect x="925" y="318" width="1" height="1" fill="#000000"/><rect x="913" y="319" width="1" height="1" fill="#5a5a5a"/><rect x="914" y="319" width="11" height="1" fill="#ffffff"/><rect x="925" y="319" width="1" height="1" fill="#000000"/><rect x="913" y="320" width="1" height="1" fill="#5a5a5a"/><rect x="914" y="320" width="11" height="1" fill="#ffffff"/><rect x="925" y="320" width="1" height="1" fill="#000000"/><rect x="913" y="321" width="1" height="1" fill="#5a5a5a"/><rect x="914" y="321" width="11" height="1" fill="#ffffff"/><rect x="925" y="321" width="1" height="1" fill="#000000"/><rect x="913" y="322" width="13" height="1" fill="#000000"/><rect x="912" y="341" width="1" height="1" fill="#8a8af0"/><rect x="913" y="341" width="12" height="1" fill="#5a5acc"/><rect x="925" y="341" width="1" height="1" fill="#2a2a90"/><rect x="912" y="342" width="1" height="1" fill="#8a8af0"/><rect x="913" y="342" width="2" height="1" fill="#5a5acc"/><rect x="915" y="342" width="9" height="1" fill="#fafaff"/><rect x="924" y="342" width="1" height="1" fill="#5a5acc"/><rect x="925" y="342" width="1" height="1" fill="#2a2a90"/><rect x="912" y="343" width="1" height="1" fill="#8a8af0"/><rect x="913" y="343" width="2" height="1" fill="#5a5acc"/><rect x="915" y="343" width="9" height="1" fill="#fafaff"/><rect x="924" y="343" width="1" height="1" fill="#101030"/><rect x="925" y="343" width="1" height="1" fill="#2a2a90"/><rect x="912" y="344" width="1" height="1" fill="#8a8af0"/><rect x="913" y="344" width="2" height="1" fill="#5a5acc"/><rect x="915" y="344" width="8" height="1" fill="#fafaff"/><rect x="923" y="344" width="1" height="1" fill="#dedef0"/><rect x="924" y="344" width="1" height="1" fill="#5a5acc"/><rect x="925" y="344" width="1" height="1" fill="#2a2a90"/><rect x="912" y="345" width="1" height="1" fill="#8a8af0"/><rect x="913" y="345" width="2" height="1" fill="#5a5acc"/><rect x="915" y="345" width="6" height="1" fill="#fafaff"/><rect x="921" y="345" width="3" height="1" fill="#dedef0"/><rect x="924" y="345" width="1" height="1" fill="#5a5acc"/><rect x="925" y="345" width="1" height="1" fill="#2a2a90"/><rect x="912" y="346" width="1" height="1" fill="#8a8af0"/><rect x="913" y="346" width="2" height="1" fill="#5a5acc"/><rect x="915" y="346" width="5" height="1" fill="#fafaff"/><rect x="920" y="346" width="3" height="1" fill="#dedef0"/><rect x="923" y="346" width="1" height="1" fill="#c4c4d8"/><rect x="924" y="346" width="1" height="1" fill="#5a5acc"/><rect x="925" y="346" width="1" height="1" fill="#2a2a90"/><rect x="912" y="347" width="1" height="1" fill="#8a8af0"/><rect x="913" y="347" width="2" height="1" fill="#5a5acc"/><rect x="915" y="347" width="4" height="1" fill="#fafaff"/><rect x="919" y="347" width="3" height="1" fill="#dedef0"/><rect x="922" y="347" width="2" height="1" fill="#c4c4d8"/><rect x="924" y="347" width="1" height="1" fill="#5a5acc"/><rect x="925" y="347" width="1" height="1" fill="#2a2a90"/><rect x="912" y="348" width="1" height="1" fill="#8a8af0"/><rect x="913" y="348" width="2" height="1" fill="#5a5acc"/><rect x="915" y="348" width="9" height="1" fill="#2a2a90"/><rect x="924" y="348" width="1" height="1" fill="#5a5acc"/><rect x="925" y="348" width="1" height="1" fill="#2a2a90"/><rect x="912" y="349" width="1" height="1" fill="#8a8af0"/><rect x="913" y="349" width="12" height="1" fill="#5a5acc"/><rect x="925" y="349" width="1" height="1" fill="#2a2a90"/><rect x="912" y="350" width="1" height="1" fill="#8a8af0"/><rect x="913" y="350" width="3" height="1" fill="#5a5acc"/><rect x="916" y="350" width="2" height="1" fill="#101030"/><rect x="918" y="350" width="1" height="1" fill="#c4c4d8"/><rect x="919" y="350" width="3" height="1" fill="#fafaff"/><rect x="922" y="350" width="3" height="1" fill="#5a5acc"/><rect x="925" y="350" width="1" height="1" fill="#2a2a90"/><rect x="912" y="351" width="1" height="1" fill="#8a8af0"/><rect x="913" y="351" width="3" height="1" fill="#5a5acc"/><rect x="916" y="351" width="1" height="1" fill="#101030"/><rect x="917" y="351" width="1" height="1" fill="#c4c4d8"/><rect x="918" y="351" width="4" height="1" fill="#fafaff"/><rect x="922" y="351" width="3" height="1" fill="#5a5acc"/><rect x="925" y="351" width="1" height="1" fill="#2a2a90"/><rect x="912" y="352" width="1" height="1" fill="#8a8af0"/><rect x="913" y="352" width="3" height="1" fill="#5a5acc"/><rect x="916" y="352" width="1" height="1" fill="#c4c4d8"/><rect x="917" y="352" width="4" height="1" fill="#fafaff"/><rect x="921" y="352" width="1" height="1" fill="#c4c4d8"/><rect x="922" y="352" width="3" height="1" fill="#5a5acc"/><rect x="925" y="352" width="1" height="1" fill="#2a2a90"/><rect x="912" y="353" width="1" height="1" fill="#8a8af0"/><rect x="913" y="353" width="4" height="1" fill="#5a5acc"/><rect x="917" y="353" width="3" height="1" fill="#fafaff"/><rect x="920" y="353" width="2" height="1" fill="#c4c4d8"/><rect x="922" y="353" width="3" height="1" fill="#5a5acc"/><rect x="925" y="353" width="1" height="1" fill="#2a2a90"/><rect x="912" y="354" width="14" height="1" fill="#2a2a90"/><rect x="918" y="373" width="5" height="1" fill="#8a8a8a"/><rect x="916" y="374" width="2" height="1" fill="#8a8a8a"/><rect x="918" y="374" width="1" height="1" fill="#ffffff"/><rect x="919" y="374" width="3" height="1" fill="#9a9a9a"/><rect x="922" y="374" width="1" height="1" fill="#ffffff"/><rect x="923" y="374" width="2" height="1" fill="#8a8a8a"/><rect x="915" y="375" width="1" height="1" fill="#8a8a8a"/><rect x="916" y="375" width="2" height="1" fill="#ffffff"/><rect x="918" y="375" width="1" height="1" fill="#9a9a9a"/><rect x="919" y="375" width="3" height="1" fill="#ffffff"/><rect x="922" y="375" width="1" height="1" fill="#9a9a9a"/><rect x="923" y="375" width="1" height="1" fill="#ffffff"/><rect x="924" y="375" width="1" height="1" fill="#8a8a8a"/><rect x="915" y="376" width="1" height="1" fill="#8a8a8a"/><rect x="916" y="376" width="8" height="1" fill="#ffffff"/><rect x="924" y="376" width="1" height="1" fill="#000000"/><rect x="914" y="377" width="1" height="1" fill="#8a8a8a"/><rect x="915" y="377" width="10" height="1" fill="#ffffff"/><rect x="925" y="377" width="1" height="1" fill="#000000"/><rect x="915" y="378" width="8" height="1" fill="#8a8a8a"/><rect x="923" y="378" width="2" height="1" fill="#000000"/><rect x="915" y="379" width="3" height="1" fill="#ffffff"/><rect x="918" y="379" width="5" height="1" fill="#b8b8b8"/><rect x="923" y="379" width="1" height="1" fill="#000000"/><rect x="915" y="380" width="3" height="1" fill="#ffffff"/><rect x="918" y="380" width="5" height="1" fill="#b8b8b8"/><rect x="923" y="380" width="1" height="1" fill="#000000"/><rect x="915" y="381" width="3" height="1" fill="#ffffff"/><rect x="918" y="381" width="5" height="1" fill="#b8b8b8"/><rect x="923" y="381" width="1" height="1" fill="#000000"/><rect x="915" y="382" width="3" height="1" fill="#ffffff"/><rect x="918" y="382" width="5" height="1" fill="#b8b8b8"/><rect x="923" y="382" width="1" height="1" fill="#000000"/><rect x="915" y="383" width="3" height="1" fill="#ffffff"/><rect x="918" y="383" width="5" height="1" fill="#b8b8b8"/><rect x="923" y="383" width="1" height="1" fill="#000000"/><rect x="915" y="384" width="3" height="1" fill="#ffffff"/><rect x="918" y="384" width="5" height="1" fill="#b8b8b8"/><rect x="923" y="384" width="1" height="1" fill="#000000"/><rect x="915" y="385" width="3" height="1" fill="#ffffff"/><rect x="918" y="385" width="5" height="1" fill="#b8b8b8"/><rect x="923" y="385" width="1" height="1" fill="#000000"/><rect x="915" y="386" width="3" height="1" fill="#ffffff"/><rect x="918" y="386" width="5" height="1" fill="#b8b8b8"/><rect x="923" y="386" width="1" height="1" fill="#000000"/><rect x="915" y="387" width="3" height="1" fill="#ffffff"/><rect x="918" y="387" width="5" height="1" fill="#b8b8b8"/><rect x="923" y="387" width="1" height="1" fill="#000000"/><rect x="916" y="388" width="8" height="1" fill="#000000"/><g transform="translate(919.8,414.6)"><path d="M3.14 -5.23A6.1 6.1 0 1 1 -5.23 -3.14L-2.6 -5.9" fill="none" stroke="#0a50a0" stroke-width="2.1"/><path d="M-7.3 -6.6H-1.9V-1.5" fill="none" stroke="#0a50a0" stroke-width="2"/></g><rect x="16" y="704" width="10" height="1" fill="#5a5a5a"/><rect x="16" y="705" width="1" height="1" fill="#5a5a5a"/><rect x="17" y="705" width="9" height="1" fill="#ffffff"/><rect x="26" y="705" width="1" height="1" fill="#b0b0b0"/><rect x="16" y="706" width="1" height="1" fill="#5a5a5a"/><rect x="17" y="706" width="10" height="1" fill="#ffffff"/><rect x="27" y="706" width="1" height="1" fill="#b0b0b0"/><rect x="16" y="707" width="1" height="1" fill="#5a5a5a"/><rect x="17" y="707" width="8" height="1" fill="#ffffff"/><rect x="25" y="707" width="4" height="1" fill="#000000"/><rect x="16" y="708" width="1" height="1" fill="#5a5a5a"/><rect x="17" y="708" width="11" height="1" fill="#ffffff"/><rect x="28" y="708" width="1" height="1" fill="#000000"/><rect x="16" y="709" width="1" height="1" fill="#5a5a5a"/><rect x="17" y="709" width="11" height="1" fill="#ffffff"/><rect x="28" y="709" width="1" height="1" fill="#000000"/><rect x="16" y="710" width="1" height="1" fill="#5a5a5a"/><rect x="17" y="710" width="11" height="1" fill="#ffffff"/><rect x="28" y="710" width="1" height="1" fill="#000000"/><rect x="16" y="711" width="1" height="1" fill="#5a5a5a"/><rect x="17" y="711" width="11" height="1" fill="#ffffff"/><rect x="28" y="711" width="1" height="1" fill="#000000"/><rect x="16" y="712" width="1" height="1" fill="#5a5a5a"/><rect x="17" y="712" width="11" height="1" fill="#ffffff"/><rect x="28" y="712" width="1" height="1" fill="#000000"/><rect x="16" y="713" width="1" height="1" fill="#5a5a5a"/><rect x="17" y="713" width="11" height="1" fill="#ffffff"/><rect x="28" y="713" width="1" height="1" fill="#000000"/><rect x="16" y="714" width="1" height="1" fill="#5a5a5a"/><rect x="17" y="714" width="11" height="1" fill="#ffffff"/><rect x="28" y="714" width="1" height="1" fill="#000000"/><rect x="16" y="715" width="1" height="1" fill="#5a5a5a"/><rect x="17" y="715" width="11" height="1" fill="#ffffff"/><rect x="28" y="715" width="1" height="1" fill="#000000"/><rect x="16" y="716" width="1" height="1" fill="#5a5a5a"/><rect x="17" y="716" width="11" height="1" fill="#ffffff"/><rect x="28" y="716" width="1" height="1" fill="#000000"/><rect x="16" y="717" width="1" height="1" fill="#5a5a5a"/><rect x="17" y="717" width="11" height="1" fill="#ffffff"/><rect x="28" y="717" width="1" height="1" fill="#000000"/><rect x="16" y="718" width="1" height="1" fill="#5a5a5a"/><rect x="17" y="718" width="11" height="1" fill="#ffffff"/><rect x="28" y="718" width="1" height="1" fill="#000000"/><rect x="16" y="719" width="13" height="1" fill="#000000"/><rect x="53" y="704" width="1" height="1" fill="#ffff00"/><rect x="54" y="704" width="1" height="1" fill="#9a9a10"/><rect x="55" y="704" width="1" height="1" fill="#ffff00"/><rect x="56" y="704" width="1" height="1" fill="#9a9a10"/><rect x="57" y="704" width="1" height="1" fill="#ffff00"/><rect x="58" y="704" width="1" height="1" fill="#9a9a10"/><rect x="59" y="704" width="1" height="1" fill="#ffff00"/><rect x="60" y="704" width="1" height="1" fill="#9a9a10"/><rect x="52" y="705" width="1" height="1" fill="#a8a8a8"/><rect x="53" y="705" width="7" height="1" fill="#ffffff"/><rect x="60" y="705" width="2" height="1" fill="#000000"/><rect x="53" y="706" width="1" height="1" fill="#a8a8a8"/><rect x="54" y="706" width="1" height="1" fill="#ffffff"/><rect x="55" y="706" width="5" height="1" fill="#b8b8b8"/><rect x="60" y="706" width="2" height="1" fill="#000000"/><rect x="53" y="707" width="1" height="1" fill="#a8a8a8"/><rect x="54" y="707" width="1" height="1" fill="#ffffff"/><rect x="55" y="707" width="5" height="1" fill="#b8b8b8"/><rect x="60" y="707" width="1" height="1" fill="#000000"/><rect x="53" y="708" width="1" height="1" fill="#a8a8a8"/><rect x="54" y="708" width="1" height="1" fill="#ffffff"/><rect x="55" y="708" width="5" height="1" fill="#b8b8b8"/><rect x="60" y="708" width="1" height="1" fill="#000000"/><rect x="53" y="709" width="1" height="1" fill="#a8a8a8"/><rect x="54" y="709" width="1" height="1" fill="#ffffff"/><rect x="55" y="709" width="5" height="1" fill="#b8b8b8"/><rect x="60" y="709" width="1" height="1" fill="#000000"/><rect x="53" y="710" width="1" height="1" fill="#a8a8a8"/><rect x="54" y="710" width="1" height="1" fill="#ffffff"/><rect x="55" y="710" width="5" height="1" fill="#b8b8b8"/><rect x="60" y="710" width="1" height="1" fill="#000000"/><rect x="54" y="711" width="1" height="1" fill="#000000"/><rect x="55" y="711" width="1" height="1" fill="#ffffff"/><rect x="56" y="711" width="3" height="1" fill="#b8b8b8"/><rect x="59" y="711" width="1" height="1" fill="#000000"/><rect x="55" y="712" width="4" height="1" fill="#000000"/><rect x="55" y="713" width="1" height="1" fill="#a8a8a8"/><rect x="56" y="713" width="2" height="1" fill="#ffffff"/><rect x="58" y="713" width="1" height="1" fill="#000000"/><rect x="55" y="714" width="1" height="1" fill="#a8a8a8"/><rect x="56" y="714" width="1" height="1" fill="#ffffff"/><rect x="57" y="714" width="1" height="1" fill="#000000"/><rect x="49" y="715" width="7" height="1" fill="#a8a8a8"/><rect x="56" y="715" width="2" height="1" fill="#000000"/><rect x="48" y="716" width="1" height="1" fill="#a8a8a8"/><rect x="49" y="716" width="7" height="1" fill="#ffffff"/><rect x="56" y="716" width="1" height="1" fill="#000000"/><rect x="47" y="717" width="1" height="1" fill="#a8a8a8"/><rect x="48" y="717" width="2" height="1" fill="#ffffff"/><rect x="50" y="717" width="6" height="1" fill="#000000"/><rect x="47" y="718" width="1" height="1" fill="#a8a8a8"/><rect x="48" y="718" width="1" height="1" fill="#ffffff"/><rect x="49" y="718" width="1" height="1" fill="#000000"/><rect x="47" y="719" width="1" height="1" fill="#a8a8a8"/><rect x="48" y="719" width="1" height="1" fill="#ffffff"/><rect x="49" y="719" width="1" height="1" fill="#000000"/><rect x="81" y="707" width="14" height="1" fill="#6a6a6a"/><rect x="82" y="708" width="1" height="1" fill="#6a6a6a"/><rect x="83" y="708" width="5" height="1" fill="#ffffff"/><rect x="88" y="708" width="4" height="1" fill="#d4d4d4"/><rect x="92" y="708" width="1" height="1" fill="#000000"/><rect x="83" y="709" width="1" height="1" fill="#6a6a6a"/><rect x="84" y="709" width="4" height="1" fill="#ffffff"/><rect x="88" y="709" width="3" height="1" fill="#d4d4d4"/><rect x="91" y="709" width="1" height="1" fill="#000000"/><rect x="84" y="710" width="1" height="1" fill="#6a6a6a"/><rect x="85" y="710" width="3" height="1" fill="#ffffff"/><rect x="88" y="710" width="2" height="1" fill="#d4d4d4"/><rect x="90" y="710" width="1" height="1" fill="#000000"/><rect x="85" y="711" width="1" height="1" fill="#6a6a6a"/><rect x="86" y="711" width="2" height="1" fill="#ffffff"/><rect x="88" y="711" width="1" height="1" fill="#d4d4d4"/><rect x="89" y="711" width="1" height="1" fill="#000000"/><rect x="86" y="712" width="1" height="1" fill="#6a6a6a"/><rect x="87" y="712" width="1" height="1" fill="#ffffff"/><rect x="88" y="712" width="1" height="1" fill="#000000"/><rect x="86" y="713" width="1" height="1" fill="#6a6a6a"/><rect x="87" y="713" width="1" height="1" fill="#ffffff"/><rect x="88" y="713" width="1" height="1" fill="#000000"/><rect x="86" y="714" width="1" height="1" fill="#6a6a6a"/><rect x="87" y="714" width="1" height="1" fill="#ffffff"/><rect x="88" y="714" width="1" height="1" fill="#000000"/><rect x="86" y="715" width="1" height="1" fill="#6a6a6a"/><rect x="87" y="715" width="1" height="1" fill="#ffffff"/><rect x="88" y="715" width="1" height="1" fill="#000000"/><rect x="86" y="716" width="1" height="1" fill="#6a6a6a"/><rect x="87" y="716" width="1" height="1" fill="#ffffff"/><rect x="88" y="716" width="1" height="1" fill="#000000"/><rect x="86" y="717" width="3" height="1" fill="#000000"/><path d="M113.5 706.5L128 715" stroke="#6e6858" stroke-width="8" stroke-linecap="round"/><path d="M113.5 706.5L128 715" stroke="#fbf6e2" stroke-width="6" stroke-linecap="round"/><ellipse cx="128.6" cy="715.6" rx="3" ry="3.4" fill="#eedc90" stroke="#8a7a40" stroke-width="0.8"/><path d="M119.5 711L117.8 705Q120 702 123.3 704.2L121.8 711Z" fill="#f2b400" stroke="#b07800" stroke-width="0.5"/><path d="M120.5 710L110.3 712.8L112.3 714.2L111.8 716.5L115.3 715.4L117.2 719.6L119 717L122.3 712.5Z" fill="#f2b400" stroke="#b07800" stroke-width="0.5"/><rect x="148" y="705" width="1" height="1" fill="#8a8af0"/><rect x="149" y="705" width="12" height="1" fill="#5a5acc"/><rect x="161" y="705" width="1" height="1" fill="#2a2a90"/><rect x="148" y="706" width="1" height="1" fill="#8a8af0"/><rect x="149" y="706" width="2" height="1" fill="#5a5acc"/><rect x="151" y="706" width="9" height="1" fill="#fafaff"/><rect x="160" y="706" width="1" height="1" fill="#5a5acc"/><rect x="161" y="706" width="1" height="1" fill="#2a2a90"/><rect x="148" y="707" width="1" height="1" fill="#8a8af0"/><rect x="149" y="707" width="2" height="1" fill="#5a5acc"/><rect x="151" y="707" width="9" height="1" fill="#fafaff"/><rect x="160" y="707" width="1" height="1" fill="#101030"/><rect x="161" y="707" width="1" height="1" fill="#2a2a90"/><rect x="148" y="708" width="1" height="1" fill="#8a8af0"/><rect x="149" y="708" width="2" height="1" fill="#5a5acc"/><rect x="151" y="708" width="8" height="1" fill="#fafaff"/><rect x="159" y="708" width="1" height="1" fill="#dedef0"/><rect x="160" y="708" width="1" height="1" fill="#5a5acc"/><rect x="161" y="708" width="1" height="1" fill="#2a2a90"/><rect x="148" y="709" width="1" height="1" fill="#8a8af0"/><rect x="149" y="709" width="2" height="1" fill="#5a5acc"/><rect x="151" y="709" width="6" height="1" fill="#fafaff"/><rect x="157" y="709" width="3" height="1" fill="#dedef0"/><rect x="160" y="709" width="1" height="1" fill="#5a5acc"/><rect x="161" y="709" width="1" height="1" fill="#2a2a90"/><rect x="148" y="710" width="1" height="1" fill="#8a8af0"/><rect x="149" y="710" width="2" height="1" fill="#5a5acc"/><rect x="151" y="710" width="5" height="1" fill="#fafaff"/><rect x="156" y="710" width="3" height="1" fill="#dedef0"/><rect x="159" y="710" width="1" height="1" fill="#c4c4d8"/><rect x="160" y="710" width="1" height="1" fill="#5a5acc"/><rect x="161" y="710" width="1" height="1" fill="#2a2a90"/><rect x="148" y="711" width="1" height="1" fill="#8a8af0"/><rect x="149" y="711" width="2" height="1" fill="#5a5acc"/><rect x="151" y="711" width="4" height="1" fill="#fafaff"/><rect x="155" y="711" width="3" height="1" fill="#dedef0"/><rect x="158" y="711" width="2" height="1" fill="#c4c4d8"/><rect x="160" y="711" width="1" height="1" fill="#5a5acc"/><rect x="161" y="711" width="1" height="1" fill="#2a2a90"/><rect x="148" y="712" width="1" height="1" fill="#8a8af0"/><rect x="149" y="712" width="2" height="1" fill="#5a5acc"/><rect x="151" y="712" width="9" height="1" fill="#2a2a90"/><rect x="160" y="712" width="1" height="1" fill="#5a5acc"/><rect x="161" y="712" width="1" height="1" fill="#2a2a90"/><rect x="148" y="713" width="1" height="1" fill="#8a8af0"/><rect x="149" y="713" width="12" height="1" fill="#5a5acc"/><rect x="161" y="713" width="1" height="1" fill="#2a2a90"/><rect x="148" y="714" width="1" height="1" fill="#8a8af0"/><rect x="149" y="714" width="3" height="1" fill="#5a5acc"/><rect x="152" y="714" width="2" height="1" fill="#101030"/><rect x="154" y="714" width="1" height="1" fill="#c4c4d8"/><rect x="155" y="714" width="3" height="1" fill="#fafaff"/><rect x="158" y="714" width="3" height="1" fill="#5a5acc"/><rect x="161" y="714" width="1" height="1" fill="#2a2a90"/><rect x="148" y="715" width="1" height="1" fill="#8a8af0"/><rect x="149" y="715" width="3" height="1" fill="#5a5acc"/><rect x="152" y="715" width="1" height="1" fill="#101030"/><rect x="153" y="715" width="1" height="1" fill="#c4c4d8"/><rect x="154" y="715" width="4" height="1" fill="#fafaff"/><rect x="158" y="715" width="3" height="1" fill="#5a5acc"/><rect x="161" y="715" width="1" height="1" fill="#2a2a90"/><rect x="148" y="716" width="1" height="1" fill="#8a8af0"/><rect x="149" y="716" width="3" height="1" fill="#5a5acc"/><rect x="152" y="716" width="1" height="1" fill="#c4c4d8"/><rect x="153" y="716" width="4" height="1" fill="#fafaff"/><rect x="157" y="716" width="1" height="1" fill="#c4c4d8"/><rect x="158" y="716" width="3" height="1" fill="#5a5acc"/><rect x="161" y="716" width="1" height="1" fill="#2a2a90"/><rect x="148" y="717" width="1" height="1" fill="#8a8af0"/><rect x="149" y="717" width="4" height="1" fill="#5a5acc"/><rect x="153" y="717" width="3" height="1" fill="#fafaff"/><rect x="156" y="717" width="2" height="1" fill="#c4c4d8"/><rect x="158" y="717" width="3" height="1" fill="#5a5acc"/><rect x="161" y="717" width="1" height="1" fill="#2a2a90"/><rect x="148" y="718" width="14" height="1" fill="#2a2a90"/><rect x="187" y="704" width="5" height="1" fill="#8a8a8a"/><rect x="185" y="705" width="2" height="1" fill="#8a8a8a"/><rect x="187" y="705" width="1" height="1" fill="#ffffff"/><rect x="188" y="705" width="3" height="1" fill="#9a9a9a"/><rect x="191" y="705" width="1" height="1" fill="#ffffff"/><rect x="192" y="705" width="2" height="1" fill="#8a8a8a"/><rect x="184" y="706" width="1" height="1" fill="#8a8a8a"/><rect x="185" y="706" width="2" height="1" fill="#ffffff"/><rect x="187" y="706" width="1" height="1" fill="#9a9a9a"/><rect x="188" y="706" width="3" height="1" fill="#ffffff"/><rect x="191" y="706" width="1" height="1" fill="#9a9a9a"/><rect x="192" y="706" width="1" height="1" fill="#ffffff"/><rect x="193" y="706" width="1" height="1" fill="#8a8a8a"/><rect x="184" y="707" width="1" height="1" fill="#8a8a8a"/><rect x="185" y="707" width="8" height="1" fill="#ffffff"/><rect x="193" y="707" width="1" height="1" fill="#000000"/><rect x="183" y="708" width="1" height="1" fill="#8a8a8a"/><rect x="184" y="708" width="10" height="1" fill="#ffffff"/><rect x="194" y="708" width="1" height="1" fill="#000000"/><rect x="184" y="709" width="8" height="1" fill="#8a8a8a"/><rect x="192" y="709" width="2" height="1" fill="#000000"/><rect x="184" y="710" width="3" height="1" fill="#ffffff"/><rect x="187" y="710" width="5" height="1" fill="#b8b8b8"/><rect x="192" y="710" width="1" height="1" fill="#000000"/><rect x="184" y="711" width="3" height="1" fill="#ffffff"/><rect x="187" y="711" width="5" height="1" fill="#b8b8b8"/><rect x="192" y="711" width="1" height="1" fill="#000000"/><rect x="184" y="712" width="3" height="1" fill="#ffffff"/><rect x="187" y="712" width="5" height="1" fill="#b8b8b8"/><rect x="192" y="712" width="1" height="1" fill="#000000"/><rect x="184" y="713" width="3" height="1" fill="#ffffff"/><rect x="187" y="713" width="5" height="1" fill="#b8b8b8"/><rect x="192" y="713" width="1" height="1" fill="#000000"/><rect x="184" y="714" width="3" height="1" fill="#ffffff"/><rect x="187" y="714" width="5" height="1" fill="#b8b8b8"/><rect x="192" y="714" width="1" height="1" fill="#000000"/><rect x="184" y="715" width="3" height="1" fill="#ffffff"/><rect x="187" y="715" width="5" height="1" fill="#b8b8b8"/><rect x="192" y="715" width="1" height="1" fill="#000000"/><rect x="184" y="716" width="3" height="1" fill="#ffffff"/><rect x="187" y="716" width="5" height="1" fill="#b8b8b8"/><rect x="192" y="716" width="1" height="1" fill="#000000"/><rect x="184" y="717" width="3" height="1" fill="#ffffff"/><rect x="187" y="717" width="5" height="1" fill="#b8b8b8"/><rect x="192" y="717" width="1" height="1" fill="#000000"/><rect x="184" y="718" width="3" height="1" fill="#ffffff"/><rect x="187" y="718" width="5" height="1" fill="#b8b8b8"/><rect x="192" y="718" width="1" height="1" fill="#000000"/><rect x="185" y="719" width="8" height="1" fill="#000000"/><g transform="translate(220.3,712.6)"><path d="M3.14 -5.23A6.1 6.1 0 1 1 -5.23 -3.14L-2.6 -5.9" fill="none" stroke="#0a50a0" stroke-width="2.1"/><path d="M-7.3 -6.6H-1.9V-1.5" fill="none" stroke="#0a50a0" stroke-width="2"/></g><path d="M436.2 706A3.4 3.4 0 0 0 436.2 712.8H444.3M440.6 708.9L444.5 712.8L440.6 716.7" fill="none" stroke="#0a55a8" stroke-width="2.2" stroke-linecap="round" stroke-linejoin="round"/><path d="M474 718A3.6 3.6 0 0 0 474 710.8H465.6M469.3 706.9L465.4 710.8L469.3 714.7" fill="none" stroke="#0a55a8" stroke-width="2.2" stroke-linecap="round" stroke-linejoin="round"/><rect x="3.8" y="750.8" width="18.4" height="17.4" rx="2" fill="#f4f4f4" stroke="#2a82dc" stroke-width="1.6"/><rect x="4.6" y="751.6" width="16.8" height="2.2" fill="#5ab4ea"/><path d="M6 756.5H10.5M6 762.5H10.5" stroke="#b8b8b8" stroke-width="1.8"/><path d="M12 756H19.5M12 762H19.5" stroke="#a8a8a8" stroke-width="1"/><path d="M13 757.5H19M13 763.5H19" stroke="#ffffff" stroke-width="1.6"/><path d="M28 758H35.5L31.7 762Z" fill="#111"/><rect x="946" y="759" width="2" height="2" fill="#9a9a9a"/><rect x="942" y="763" width="2" height="2" fill="#9a9a9a"/><rect x="946" y="763" width="2" height="2" fill="#9a9a9a"/><rect x="938" y="767" width="2" height="2" fill="#9a9a9a"/><rect x="942" y="767" width="2" height="2" fill="#9a9a9a"/><rect x="946" y="767" width="2" height="2" fill="#9a9a9a"/></svg>
<svg style="position:absolute;left:0;top:0" width="953" height="772" viewBox="0 0 953 772"><rect x="553.5" y="261.5" width="250" height="40" rx="4" fill="none" stroke="#808070" stroke-opacity="0.35" stroke-width="5"/><rect x="554.5" y="260.5" width="250" height="40" rx="4" fill="#fff" stroke="#ffd200" stroke-width="5"/><text x="570.5" y="285.3" font-family="Liberation Sans" font-size="16.2" fill="#262626">Save RFC to SapScale server</text><rect x="621.5" y="388.5" width="136" height="40" rx="4" fill="none" stroke="#808070" stroke-opacity="0.35" stroke-width="5"/><rect x="622.5" y="387.5" width="136" height="40" rx="4" fill="#fff" stroke="#ffd200" stroke-width="5"/><text x="634.6" y="412.3" font-family="Liberation Sans" font-size="16.4" fill="#262626">Refresh screen</text><rect x="894.3" y="327.5" width="48.3" height="40.8" rx="3.5" fill="none" stroke="#02f520" stroke-width="7"/><polygon points="817,290 849,305 848.5,294 879,324.6 836,319 845,313.4 814.2,295.7" fill="#05f020" stroke="#6a4a6a" stroke-opacity="0.25" stroke-width="0.6"/><polygon points="769.4,406.2 860.7,410.2 856.8,400.7 897,416.5 855.2,428.3 860.7,418.8 769.4,413.3" fill="#05f020" stroke="#6a4a6a" stroke-opacity="0.25" stroke-width="0.6"/></svg>
</body></html>
